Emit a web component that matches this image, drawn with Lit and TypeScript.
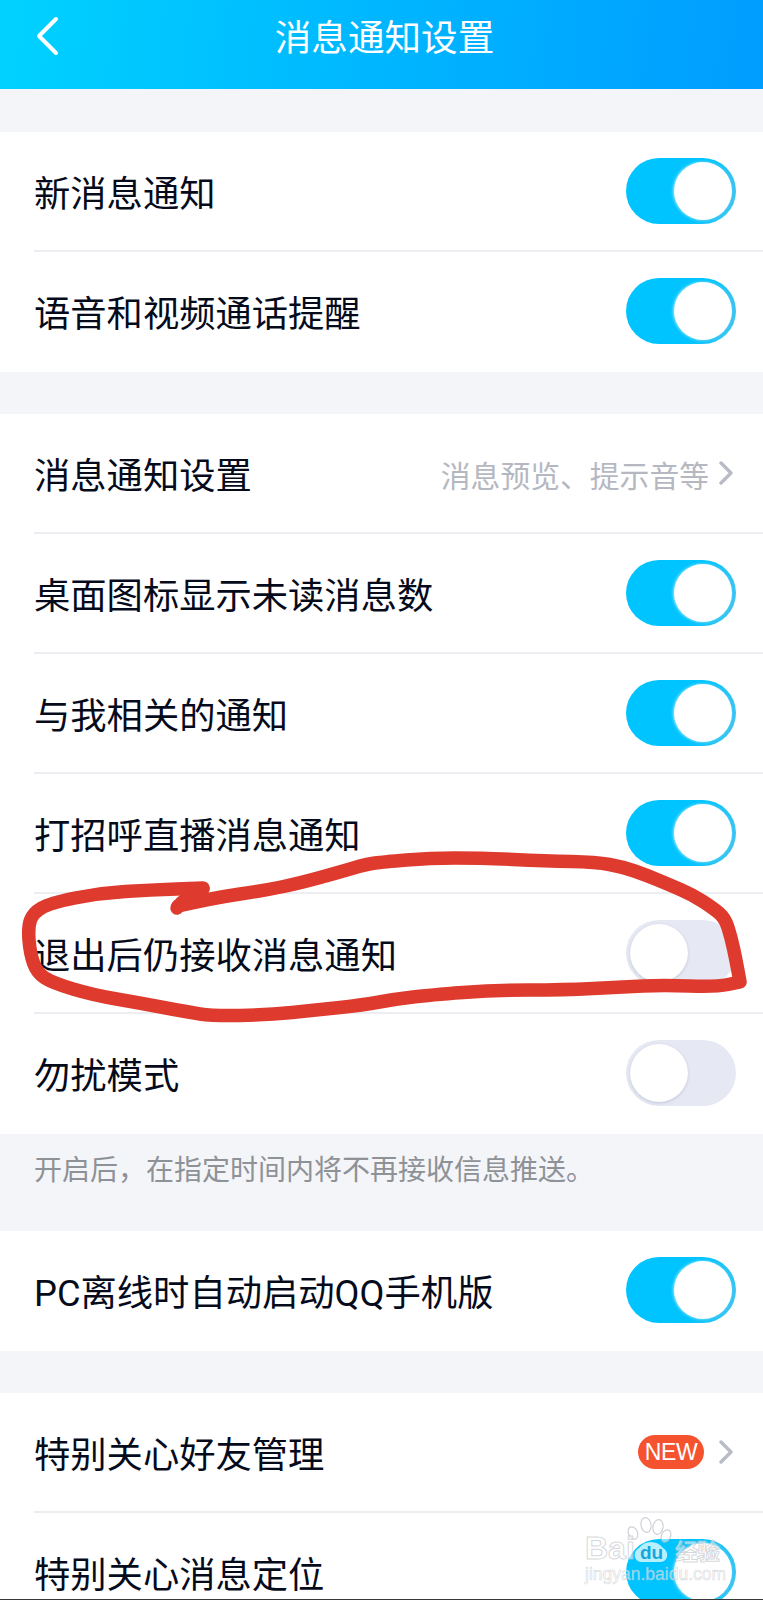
import { LitElement, html, css, svg, nothing } from "lit";
import { customElement, property } from "lit/decorators.js";

type Row = { label: string; toggle?: boolean; sub?: string; badge?: string; chevron?: boolean };

const SECTIONS: { rows: Row[]; note?: string }[] = [
  { rows: [
    { label: "新消息通知", toggle: true },
    { label: "语音和视频通话提醒", toggle: true },
  ] },
  { rows: [
    { label: "消息通知设置", sub: "消息预览、提示音等", chevron: true },
    { label: "桌面图标显示未读消息数", toggle: true },
    { label: "与我相关的通知", toggle: true },
    { label: "打招呼直播消息通知", toggle: true },
    { label: "退出后仍接收消息通知", toggle: false },
    { label: "勿扰模式", toggle: false },
  ], note: "开启后\uFF0C在指定时间内将不再接收信息推送。" },
  { rows: [{ label: "PC离线时自动启动QQ手机版", toggle: true }] },
  { rows: [
    { label: "特别关心好友管理", badge: "NEW", chevron: true },
    { label: "特别关心消息定位", toggle: true },
  ] },
];

const LOOP: [number, number][] = [
  [178, 906], [213, 898], [267, 890], [300, 883], [340, 872], [367, 864], [383, 862], [430, 858], [480, 858],
  [546, 861], [596, 862], [623, 867], [646, 875], [670, 885], [693, 895], [713, 908], [725, 918],
  [731, 937], [736, 960], [740, 982], [740, 982], [716, 987], [663, 985], [623, 987], [563, 990], [496, 990],
  [430, 995], [396, 999], [363, 1005], [317, 1010], [267, 1015], [213, 1016], [187, 1012], [140, 1003],
  [93, 995], [53, 983], [37, 973], [30, 953], [28, 927], [33, 913], [50, 903], [100, 893], [150, 890], [203, 888],
];

function smooth(p: [number, number][]): string {
  let d = `M${p[0][0]} ${p[0][1]}`;
  for (let i = 1; i < p.length - 1; i++) {
    const mx = (p[i][0] + p[i + 1][0]) / 2;
    const my = (p[i][1] + p[i + 1][1]) / 2;
    d += ` Q${p[i][0]} ${p[i][1]} ${mx} ${my}`;
  }
  const l = p[p.length - 1];
  return d + ` L${l[0]} ${l[1]}`;
}

@customElement("qq-toggle")
class QqToggle extends LitElement {
  @property({ type: Boolean }) on = false;
  static styles = css`
    :host { display: block; }
    .track {
      width: 110px; height: 66px; border-radius: 33px; box-sizing: border-box;
      display: flex; align-items: center; padding: 0 4px; justify-content: flex-start;
      background: #e6e9f3;
    }
    .track.on {
      justify-content: flex-end;
      background: linear-gradient(105deg, #00c4ff 62%, #45c4ee);
    }
    .knob {
      width: 58px; height: 58px; border-radius: 50%; background: #fff;
      box-shadow: 0 1px 3px rgba(120, 130, 160, 0.35);
    }
    .on .knob { box-shadow: -1px 0 3px rgba(255, 255, 255, 0.6); }
  `;
  render() {
    return html`<div class="track ${this.on ? "on" : ""}"><div class="knob"></div></div>`;
  }
}

@customElement("app-root")
class AppRoot extends LitElement {
  static styles = css`
    :host {
      display: block; position: relative; width: 763px; height: 1600px; overflow: hidden;
      background: #f3f5f8;
      font-family: Roboto, "Noto Sans CJK SC", "Liberation Sans", sans-serif;
      color: #060b1c;
    }
    header {
      height: 89px; box-sizing: border-box; padding: 0 30px 18px 36px;
      display: grid; grid-template-columns: 1fr auto 1fr; align-items: center;
      background: linear-gradient(96deg, #00d2ff 0%, #00b6ff 50%, #009dff 100%);
      color: #fff;
    }
    header svg { display: block; width: 24px; height: 40px; }
    .title { font-size: 36.6px; line-height: 50px; padding-top: 6px; }
    .sections { display: flex; flex-direction: column; padding-top: 43px; gap: 42px; }
    .section { background: #fff; }
    .note {
      height: 55px; box-sizing: border-box; padding: 18px 34px 0;
      font-size: 28px; line-height: 38px; color: #8e9196;
      white-space: nowrap;
    }
    .row {
      height: 120px; box-sizing: border-box; margin-left: 34px; padding: 0 27px 0 0;
      display: flex; align-items: center; justify-content: space-between;
      border-bottom: 2px solid #eceef2;
    }
    .row:last-child { border-bottom: none; padding-bottom: 2px; }
    .label { font-size: 36.3px; line-height: 50px; padding-top: 8px; white-space: nowrap; }
    .right { display: flex; align-items: center; }
    .sub { font-size: 29.8px; line-height: 42px; padding-top: 8px; color: #b5b8c1; margin-right: 10px; white-space: nowrap; }
    .chev { display: block; width: 14px; height: 24px; margin-right: 3px; }
    .badge {
      width: 66px; height: 34px; border-radius: 17px; background: #f5532f; color: #fff;
      font: 23px/34px "Liberation Sans", sans-serif; letter-spacing: -0.4px; text-align: center; margin-right: 15px;
    }
    .ink { position: absolute; left: 0; top: 0; width: 763px; height: 1600px; pointer-events: none; }
    .watermark { position: absolute; left: 584px; top: 1516px; width: 140px; height: 70px; pointer-events: none; }
    .watermark svg { position: absolute; left: 0; top: 0; width: 140px; height: 70px; }
    .wm {
      position: absolute; white-space: nowrap; color: rgba(255, 255, 255, 0.55);
      -webkit-text-stroke: 1px rgba(185, 190, 195, 0.6);
    }
    .wm-bai { left: 1px; top: 13px; font: 700 32px/38px "Liberation Sans", sans-serif; }
    .wm-du { left: 56px; top: 23px; font: 700 19px/28px "Liberation Sans", sans-serif; color: rgba(0, 155, 215, 0.9); -webkit-text-stroke: 0; }
    .wm-jy { left: 91px; top: 19px; font: 700 23px/30px "Noto Sans CJK SC", sans-serif; letter-spacing: -1px; }
    .wm-url { left: 1px; top: 47px; font: 17.5px/22px "Liberation Sans", sans-serif; -webkit-text-stroke: 0.6px rgba(185, 190, 195, 0.6); }
    .base { position: absolute; left: 0; right: 0; bottom: 0; height: 1px; background: #3a3a3a; }
  `;

  chevron() {
    return html`<svg class="chev" viewBox="0 0 14 24" fill="none" stroke="#b9bcc6" stroke-width="3.4" stroke-linecap="round" stroke-linejoin="round"><path d="M2 2 L12 12 L2 22"/></svg>`;
  }

  row(r: Row) {
    return html`<div class="row">
      <div class="label">${r.label}</div>
      ${r.toggle !== undefined ? html`<qq-toggle ?on=${r.toggle}></qq-toggle>` : html`<div class="right">
        ${r.sub ? html`<span class="sub">${r.sub}</span>` : nothing}
        ${r.badge ? html`<span class="badge">${r.badge}</span>` : nothing}
        ${r.chevron ? this.chevron() : nothing}
      </div>`}
    </div>`;
  }

  render() {
    return html`
      <header>
        <svg viewBox="0 0 24 40" fill="none" stroke="#fff" stroke-width="4" stroke-linecap="round" stroke-linejoin="round"><path d="M20 3 L3 20 L20 37"/></svg>
        <div class="title">消息通知设置</div>
        <div></div>
      </header>
      <div class="sections">
        ${SECTIONS.map((s) => html`<div>
          <div class="section">${s.rows.map((r) => this.row(r))}</div>
          ${s.note ? html`<div class="note">${s.note}</div>` : nothing}
        </div>`)}
      </div>
      <svg class="ink" viewBox="0 0 763 1600" fill="none" stroke="#de3a2e" stroke-width="13.5" stroke-linecap="round" stroke-linejoin="round">
        ${svg`<path d=${smooth(LOOP)}></path><path d="M203 889 Q186 896 177 908"></path>`}
      </svg>
      <div class="watermark">
        <svg viewBox="0 0 140 70" fill="rgba(255,255,255,0.5)" stroke="rgba(185,190,195,0.7)" stroke-width="1.2">
          <ellipse cx="49" cy="17" rx="4.5" ry="6.5" transform="rotate(-25 49 17)"></ellipse>
          <ellipse cx="62" cy="9" rx="5" ry="7.5" transform="rotate(-10 62 9)"></ellipse>
          <ellipse cx="74" cy="11" rx="5" ry="7.5" transform="rotate(10 74 11)"></ellipse>
          <ellipse cx="82" cy="20" rx="4.5" ry="6.5" transform="rotate(25 82 20)"></ellipse>
          <path d="M55 32 C58 28 62 26 67 26 C72 26 76 28 79 32 C85 35 85 46 76 46 L58 46 C49 46 49 35 55 32 Z" fill="rgba(255,255,255,0.72)" stroke="none"></path>
        </svg>
        <span class="wm wm-bai">Bai</span>
        <span class="wm wm-du">du</span>
        <span class="wm wm-jy">经验</span>
        <span class="wm wm-url">jingyan.baidu.com</span>
      </div>
      <div class="base"></div>
    `;
  }
}
